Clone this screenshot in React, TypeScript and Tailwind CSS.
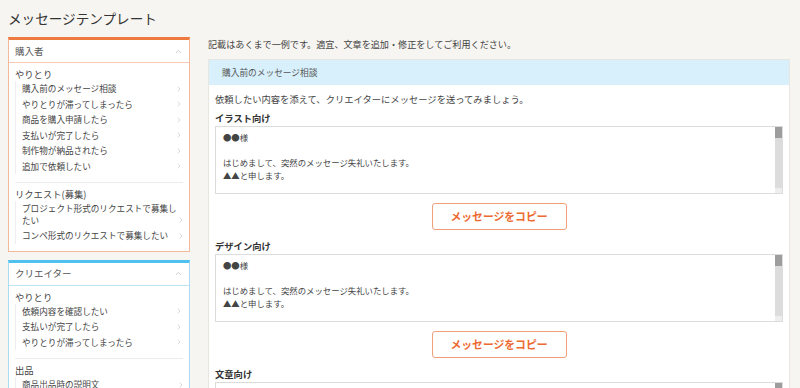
import React from 'react';
import { ChevronRight, ChevronUp } from 'lucide-react';

type Group = { title: string; items: string[] };

const BUYER_GROUPS: Group[] = [
  {
    title: 'やりとり',
    items: [
      '購入前のメッセージ相談',
      'やりとりが滞ってしまったら',
      '商品を購入申請したら',
      '支払いが完了したら',
      '制作物が納品されたら',
      '追加で依頼したい',
    ],
  },
  {
    title: 'リクエスト(募集)',
    items: ['プロジェクト形式のリクエストで募集したい', 'コンペ形式のリクエストで募集したい'],
  },
];

const CREATOR_GROUPS: Group[] = [
  {
    title: 'やりとり',
    items: ['依頼内容を確認したい', '支払いが完了したら', 'やりとりが滞ってしまったら'],
  },
  {
    title: '出品',
    items: ['商品出品時の説明文', '出品内容を修正したら'],
  },
];

const makeMessage = (kind: string) =>
  [
    '●●様',
    '',
    'はじめまして、突然のメッセージ失礼いたします。',
    '▲▲と申します。',
    '',
    `●●様の作品を拝見し、ぜひ${kind}をお願いしたくご連絡いたしました。`,
    '以下の内容でご依頼を検討しております。',
    '',
    '【用途】',
    '【サイズ・形式】',
    '【点数】',
    '【希望納期】',
    '【ご予算】',
    '',
    'お忙しいところ恐れ入りますが、',
    'ご検討のほど、よろしくお願いいたします。',
  ].join('\n');

const TEMPLATES = [
  { label: 'イラスト向け', text: makeMessage('イラスト制作') },
  { label: 'デザイン向け', text: makeMessage('デザイン制作') },
  { label: '文章向け', text: makeMessage('文章作成') },
];

const SideBox = ({ title, groups, tone }: { title: string; groups: Group[]; tone: 'orange' | 'blue' }) => (
  <div
    className={`bg-white border border-t-[3px] ${
      tone === 'orange' ? 'border-[#f4b89b] border-t-[#ef7a40]' : 'border-[#a9dcf2] border-t-[#4ec1ee]'
    }`}
  >
    <div
      className={`h-[23px] px-[6px] flex items-center justify-between border-b ${
        tone === 'orange' ? 'border-[#f6c9b3]' : 'border-[#bfe5f5]'
      }`}
    >
      <span className="text-[9.5px] text-[#555]">{title}</span>
      <ChevronUp size={9} strokeWidth={1.5} className="text-[#aaa]" />
    </div>
    <div className="pl-[6px] pr-[4px] pt-[4px] pb-[7px]">
      {groups.map((g, gi) => (
        <div
          key={g.title}
          className={gi < groups.length - 1 ? 'pb-[8px] mr-[2px] border-b border-[#ececec] mb-[4px]' : ''}
        >
          <div className="text-[9.3px] leading-[14px] text-[#444]">{g.title}</div>
          <ul className="border-l border-[#eeeeee]">
            {g.items.map((it) => (
              <li key={it} className="pl-[6px] py-[2px] flex items-end justify-between">
                <span className="text-[8.6px] leading-[11.5px] text-[#444]">{it}</span>
                <ChevronRight size={8} strokeWidth={1.5} className="shrink-0 mb-[2px] text-[#b5b5b5]" />
              </li>
            ))}
          </ul>
        </div>
      ))}
    </div>
  </div>
);

const MessageBox = ({ text }: { text: string }) => (
  <div className="mt-[1px] h-[68px] flex border border-[#dcdcdc] bg-white">
    <textarea
      readOnly
      defaultValue={text}
      className="flex-1 min-w-0 h-full resize-none overflow-hidden pt-[4px] px-[7px] text-[8.4px] leading-[12.5px] text-[#444] outline-none"
    />
    {/* scrollbar */}
    <div className="w-[7px] shrink-0 flex flex-col bg-[#dcdcdc]">
      <div className="h-[11px] bg-[#9d9d9d]" />
      <div className="flex-1" />
      <div className="h-[5px] bg-[#eeeeee]" />
    </div>
  </div>
);

export default function App() {
  return (
    <div className="h-[388px] overflow-hidden bg-[#f7f5f1] px-2 pt-2 font-['Noto_Sans_CJK_JP',sans-serif] text-[#444]">
      <h1 className="text-[13.6px] leading-[20px] text-[#333]">メッセージテンプレート</h1>

      <div className="mt-[9px] flex gap-[18px]">
        {/* Sidebar */}
        <aside className="w-[182px] shrink-0 flex flex-col gap-[8px]">
          <SideBox title="購入者" groups={BUYER_GROUPS} tone="orange" />
          <SideBox title="クリエイター" groups={CREATOR_GROUPS} tone="blue" />
        </aside>

        {/* Main */}
        <main className="w-[582px] shrink-0">
          <p className="text-[9.1px] leading-[15px] text-[#444]">
            記載はあくまで一例です。適宜、文章を追加・修正をしてご利用ください。
          </p>

          <section className="mt-[7px] bg-white border border-[#e8e6e0]">
            <div className="h-[25px] px-[13px] flex items-center bg-[#d8f0fb] text-[8.7px] text-[#555]">
              購入前のメッセージ相談
            </div>
            <div className="px-[6px] pt-[7px] pb-4">
              <p className="text-[9.3px] leading-[15px] text-[#444]">
                依頼したい内容を添えて、クリエイターにメッセージを送ってみましょう。
              </p>
              {TEMPLATES.map((t, i) => (
                <div key={t.label} className={i === 0 ? 'mt-[4px]' : 'mt-[9px]'}>
                  <h3 className="text-[9.3px] leading-[14px] font-bold text-[#333]">{t.label}</h3>
                  <MessageBox text={t.text} />
                  {i < TEMPLATES.length - 1 && (
                    <div className="mt-[9px] flex justify-center">
                      <button className="w-[135px] h-[27px] rounded-[3px] border border-[#f2a07a] bg-white text-[10.8px] font-bold text-[#ec6a30]">
                        メッセージをコピー
                      </button>
                    </div>
                  )}
                </div>
              ))}
            </div>
          </section>
        </main>
      </div>
    </div>
  );
}
